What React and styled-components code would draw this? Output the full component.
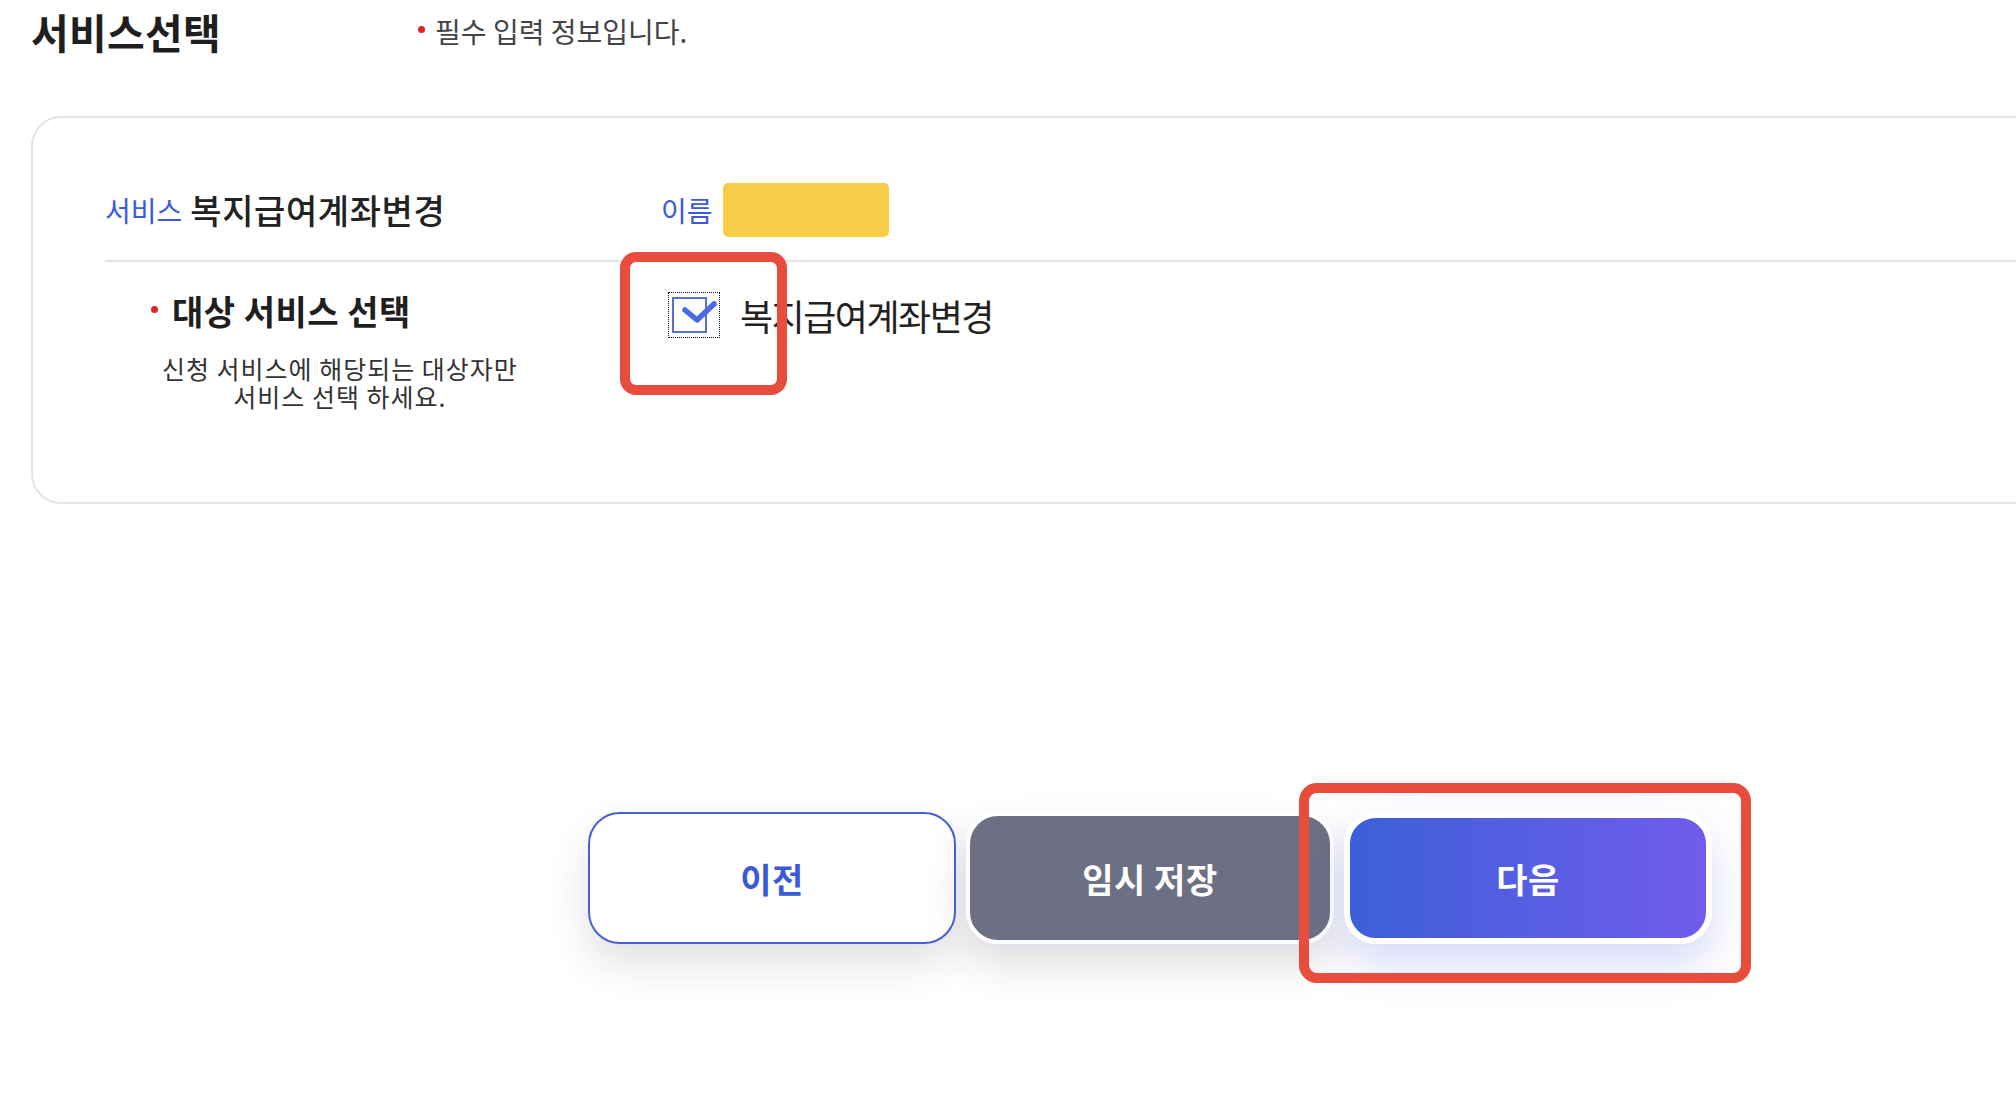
import styled, { createGlobalStyle } from 'styled-components'

const GlobalStyle = createGlobalStyle`
html {
    overflow: hidden;
}
body {
    margin: 0;
    padding: 0;
    background: #fff;
    font-family: "Noto Sans CJK KR", "Noto Sans", sans-serif;
    color: #222;
}
`

function CheckMark() {
    return (
        <svg width="52" height="46" viewBox="0 0 52 46">
            <rect x="5" y="6" width="33" height="34" fill="#fff" stroke="#5470d1" strokeWidth="2" />
            <path d="M17 18 L29 28 L46 12" fill="none" stroke="#4b6ae0" strokeWidth="5.5"
                strokeLinecap="round" strokeLinejoin="round" />
        </svg>
    )
}

function App() {
    return (
        <Page>
            <GlobalStyle />
            <Header>
                <Title>서비스선택</Title>
                <Notice>
                    <Dot $top={9} />
                    필수 입력 정보입니다.
                </Notice>
            </Header>

            <Card>
                <InfoRow>
                    <Field $gap={8}>
                        <Label>서비스</Label>
                        <Value>복지급여계좌변경</Value>
                    </Field>
                    <Field $gap={10}>
                        <Label>이름</Label>
                        <NameBox />
                    </Field>
                </InfoRow>

                <SelectRow>
                    <div>
                        <SelectTitle>
                            <Dot $top={12} />
                            대상 서비스 선택
                        </SelectTitle>
                        <Desc>
                            신청 서비스에 해당되는 대상자만<br />
                            서비스 선택 하세요.
                        </Desc>
                    </div>
                    <CheckItem>
                        <CheckBox>
                            <CheckMark />
                            <Highlight $left={-48} $top={-40} $w={167} $h={143} $r={16} />
                        </CheckBox>
                        복지급여계좌변경
                    </CheckItem>
                </SelectRow>
            </Card>

            <ButtonRow>
                <Button $variant="prev">이전</Button>
                <Button $variant="save">임시 저장</Button>
                <Button $variant="next">
                    다음
                    <Highlight $left={-51} $top={-35} $w={452} $h={200} $r={18} />
                </Button>
            </ButtonRow>
        </Page>
    )
}

export default App

/**Style */

const Page = styled.div`
width: 2300px;
min-height: 1115px;
padding: 11px 31px 0;
box-sizing: border-box;
`
const Header = styled.header`
display: flex;
align-items: flex-start;
gap: 197px;
`
const Title = styled.h1`
margin: 0;
font-size: 41px;
line-height: 40px;
font-weight: 700;
letter-spacing: 0.3px;
color: #1f1f1f;
`
const Notice = styled.p`
margin: 6px 0 0;
display: flex;
align-items: flex-start;
gap: 10px;
font-size: 28px;
line-height: 28px;
color: #444;
`
const Dot = styled.span`
flex-shrink: 0;
width: 7px;
height: 7px;
margin-top: ${p => p.$top}px;
border-radius: 50%;
background: #e4232b;
`
const Card = styled.section`
margin-top: 65px;
border: 2px solid #e5e5e5;
border-radius: 30px;
padding: 65px 0 92px 72px;
`
const InfoRow = styled.div`
display: grid;
grid-template-columns: 556px 1fr;
align-items: center;
height: 54px;
padding-bottom: 23px;
border-bottom: 2px solid #e3e3e3;
`
const Field = styled.div`
display: flex;
align-items: center;
gap: ${p => p.$gap}px;
`
const Label = styled.span`
font-size: 28px;
line-height: 1;
color: #3b5bdb;
`
const Value = styled.span`
font-size: 34px;
line-height: 1;
font-weight: 500;
letter-spacing: 0.6px;
color: #222;
`
const NameBox = styled.div`
width: 166px;
height: 54px;
border-radius: 5px;
background: #f5cd46;
`
const SelectRow = styled.div`
display: grid;
grid-template-columns: 556px 1fr;
align-items: start;
padding-top: 30px;
`
const SelectTitle = styled.h2`
margin: 2px 0 0;
display: flex;
align-items: flex-start;
gap: 14px;
padding-left: 46px;
font-size: 34px;
line-height: 34px;
font-weight: 700;
letter-spacing: 0.5px;
color: #1f1f1f;
`
const Desc = styled.p`
margin: 26px 0 0 57px;
width: max-content;
text-align: center;
font-size: 25px;
line-height: 28px;
letter-spacing: 1px;
color: #333;
`
const CheckItem = styled.label`
display: flex;
align-items: center;
gap: 20px;
margin-left: 7px;
font-size: 36px;
line-height: 1;
letter-spacing: -1.5px;
color: #222;
`
const CheckBox = styled.span`
position: relative;
display: flex;
width: 52px;
height: 46px;
outline: 1px dotted #111;
outline-offset: -1px;
`
const Highlight = styled.span`
position: absolute;
left: ${p => p.$left}px;
top: ${p => p.$top}px;
width: ${p => p.$w}px;
height: ${p => p.$h}px;
box-sizing: border-box;
border: 10px solid #e84c3d;
border-radius: ${p => p.$r}px;
pointer-events: none;
`
const variants = {
    prev: `
        border: 2px solid #4561d8;
        background: #fff;
        color: #3a5bd8;
        box-shadow: 0 20px 40px rgba(40, 40, 70, 0.14);
    `,
    save: `
        border: 4px solid #fff;
        background: #6d6f83;
        color: #fff;
        box-shadow: 0 20px 40px rgba(40, 40, 70, 0.16);
    `,
    next: `
        position: relative;
        border: 6px solid #fff;
        background: linear-gradient(90deg, #3b60d8, #715ceb);
        color: #fff;
        box-shadow: 0 20px 44px rgba(70, 80, 220, 0.22);
    `,
}
const ButtonRow = styled.div`
display: flex;
justify-content: center;
gap: 10px;
margin-top: 308px;
`
const Button = styled.button`
display: flex;
align-items: center;
justify-content: center;
width: 368px;
height: 132px;
box-sizing: border-box;
border-radius: 32px;
font-family: inherit;
font-size: 34px;
font-weight: 700;
letter-spacing: 0.5px;
cursor: pointer;
${p => variants[p.$variant]}
`
/****/
